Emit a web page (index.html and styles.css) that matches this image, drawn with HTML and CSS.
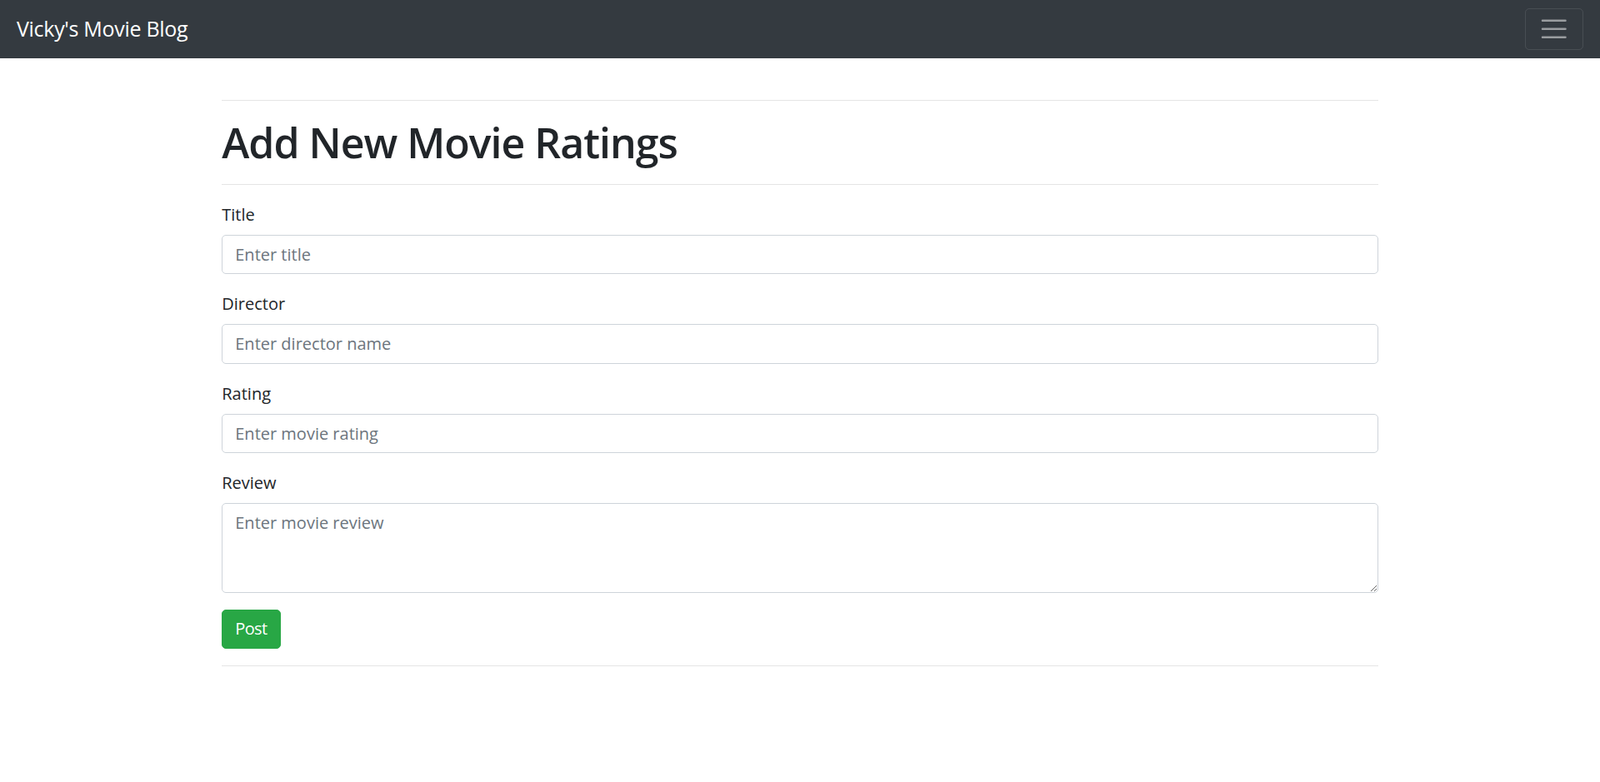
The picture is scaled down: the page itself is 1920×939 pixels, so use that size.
FILE: index.html
```html
<!DOCTYPE html>
<html lang="en">
<head>
<meta charset="utf-8">
<title>Vicky's Movie Blog</title>
<link rel="stylesheet" href="styles.css">
</head>
<body>
<nav class="navbar">
  <a class="brand" href="#">Vicky's Movie Blog</a>
  <button class="toggler" type="button" aria-label="Toggle navigation">
    <svg class="toggler-icon" viewBox="0 0 30 30" width="37.5" height="37.5"><path d="M4 7h22M4 15h22M4 23h22" stroke="rgba(255,255,255,0.5)" stroke-width="2" stroke-linecap="round" stroke-miterlimit="10" fill="none"/></svg>
  </button>
</nav>
<main class="container">
  <hr class="rule">
  <h1 class="heading">Add New Movie Ratings</h1>
  <hr class="rule">
  <form class="form">
    <div class="form-group">
      <label class="label" for="title">Title</label>
      <input class="control" id="title" type="text" placeholder="Enter title">
    </div>
    <div class="form-group">
      <label class="label" for="director">Director</label>
      <input class="control" id="director" type="text" placeholder="Enter director name">
    </div>
    <div class="form-group">
      <label class="label" for="rating">Rating</label>
      <input class="control" id="rating" type="text" placeholder="Enter movie rating">
    </div>
    <div class="form-group">
      <label class="label" for="review">Review</label>
      <textarea class="control textarea" id="review" rows="3" placeholder="Enter movie review"></textarea>
    </div>
    <button class="btn-post" type="submit">Post</button>
  </form>
  <hr class="rule">
</main>
</body>
</html>
```
FILE: styles.css
```css
* { box-sizing: border-box; }
html, body { margin: 0; }
body {
  font-family: "Open Sans", "Noto Sans", sans-serif;
  font-size: 20px;
  line-height: 1.5;
  color: #212529;
  background: #fff;
}
.navbar {
  background: #343a40;
  display: flex;
  align-items: center;
  justify-content: space-between;
  padding: 10px 20px;
  height: 69.5px;
}
.brand {
  color: #fff;
  text-decoration: none;
  font-size: 25px;
  line-height: 37.5px;
  padding: 6.25px 0;
  letter-spacing: -0.3px;
  white-space: nowrap;
}
.toggler {
  display: flex;
  align-items: center;
  justify-content: center;
  background: transparent;
  border: 1px solid rgba(255,255,255,0.1);
  border-radius: 5px;
  padding: 5px 15px;
  width: 70px;
  height: 49.5px;
}
.toggler-icon { display: block; }
.container {
  width: 1425px;
  margin: 0 auto;
  padding: 30px 18.75px 0;
}
.rule {
  margin: 20px 0;
  border: 0;
  border-top: 1px solid rgba(0,0,0,0.1);
}
.heading {
  font-size: 50px;
  font-weight: 600;
  letter-spacing: -1px;
  line-height: 1.2;
  margin: 0 0 10px;
}
.form { display: block; }
.form-group { margin-bottom: 20px; }
.label {
  display: inline-block;
  margin-bottom: 10px;
  padding-top: 1px;
  line-height: 29px;
}
.control {
  display: block;
  width: 100%;
  height: 47.5px;
  padding: 7.5px 15px;
  font: inherit;
  font-size: 20px;
  line-height: 30px;
  color: #495057;
  background: #fff;
  border: 1px solid #ced4da;
  border-radius: 5px;
}
.control::placeholder { color: #6c757d; opacity: 1; }
.textarea { height: 107.5px; resize: vertical; }
.btn-post {
  display: inline-block;
  font: inherit;
  font-size: 20px;
  line-height: 30px;
  padding: 7.5px 15px;
  letter-spacing: -0.6px;
  color: #fff;
  background: #28a745;
  border: 1px solid #28a745;
  border-radius: 5px;
}
```
